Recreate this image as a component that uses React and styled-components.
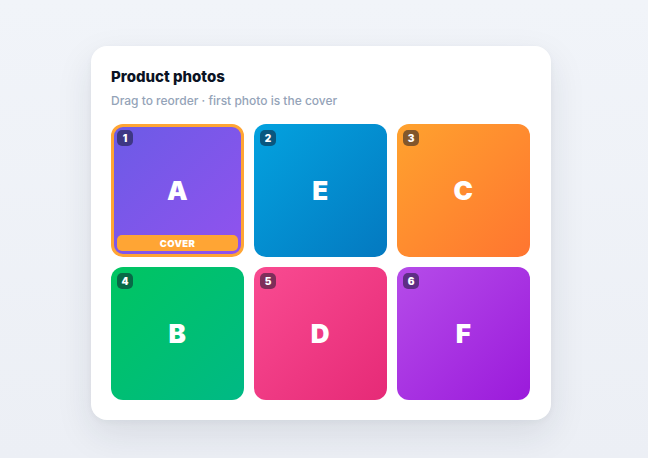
import React from "react";
import styled, { createGlobalStyle } from "styled-components";

const GlobalStyle = createGlobalStyle`
  html, body {
    margin: 0;
    padding: 0;
    background: #eff2f7;
    font-family: Inter, "Noto Sans", sans-serif;
  }
`;

const Page = styled.div`
  min-height: 100vh;
  box-sizing: border-box;
  padding: 46px 0 0 91px;
  background: linear-gradient(180deg, #f1f4f9 0%, #eceff5 100%);
`;

const Card = styled.section`
  width: 460px;
  box-sizing: border-box;
  padding: 21px 20px 20px;
  background: #fff;
  border-radius: 16px;
  box-shadow: 0 14px 36px rgba(30, 41, 59, 0.1), 0 2px 6px rgba(30, 41, 59, 0.04);
`;

const Title = styled.h2`
  margin: 0;
  font-size: 15px;
  font-weight: 800;
  color: #0b1324;
  line-height: 20px;
`;

const Subtitle = styled.p`
  margin: 6px 0 0;
  font-size: 12px;
  font-weight: 500;
  color: #94a3b8;
  line-height: 16px;
`;

const Grid = styled.div`
  margin-top: 15px;
  display: grid;
  grid-template-columns: repeat(3, 133px);
  grid-auto-rows: 133px;
  gap: 10px;
`;

const Tile = styled.div`
  position: relative;
  display: flex;
  align-items: center;
  justify-content: center;
  box-sizing: border-box;
  border-radius: 12px;
  background: linear-gradient(135deg, ${(p) => p.$from}, ${(p) => p.$to});
  border: ${(p) => (p.$cover ? "3px solid #ffa534" : "none")};
  cursor: grab;
`;

const Letter = styled.span`
  font-size: 26px;
  font-weight: 900;
  color: #fff;
  letter-spacing: 0.5px;
`;

const Badge = styled.span`
  position: absolute;
  top: ${(p) => (p.$cover ? "3px" : "6px")};
  left: ${(p) => (p.$cover ? "3px" : "6px")};
  width: 16px;
  height: 16px;
  border-radius: 5px;
  background: rgba(15, 23, 42, 0.52);
  color: #fff;
  font-size: 10px;
  font-weight: 900;
  display: flex;
  align-items: center;
  justify-content: center;
`;

const CoverBar = styled.span`
  position: absolute;
  left: 3px;
  right: 3px;
  bottom: 3px;
  height: 16px;
  border-radius: 5px;
  background: #ffa534;
  color: #fff;
  font-size: 9.5px;
  font-weight: 900;
  letter-spacing: 0.3px;
  display: flex;
  align-items: center;
  justify-content: center;
`;

const photos = [
  { id: "A", from: "#6c5be6", to: "#9152ee" },
  { id: "E", from: "#03a2df", to: "#0479c0" },
  { id: "C", from: "#ffa22e", to: "#ff7530" },
  { id: "B", from: "#00c561", to: "#00b985" },
  { id: "D", from: "#f94b91", to: "#e62a77" },
  { id: "F", from: "#b54ce9", to: "#9b1adb" },
];

export default function App() {
  return (
    <Page>
      <GlobalStyle />
      <Card>
        <Title>Product photos</Title>
        <Subtitle>Drag to reorder · first photo is the cover</Subtitle>
        <Grid>
          {photos.map((p, i) => {
            const cover = i === 0;
            return (
              <Tile key={p.id} $from={p.from} $to={p.to} $cover={cover} draggable>
                <Badge $cover={cover}>{i + 1}</Badge>
                <Letter>{p.id}</Letter>
                {cover && <CoverBar>COVER</CoverBar>}
              </Tile>
            );
          })}
        </Grid>
      </Card>
    </Page>
  );
}
